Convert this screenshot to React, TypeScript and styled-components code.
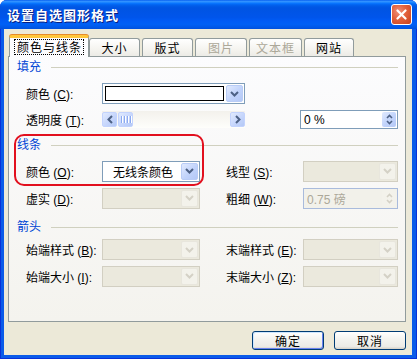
import React from "react";
import styled, { createGlobalStyle } from "styled-components";

const GlobalStyle = createGlobalStyle`
  html, body {
    margin: 0;
    padding: 0;
    background: #ffffff;
  }
  body {
    font-family: "Liberation Sans", "Noto Sans CJK SC", sans-serif;
    font-size: 12px;
    color: #000;
  }
`;

const ChevronDown = ({ color = "#4D6185" }: { color?: string }) => (
  <svg width="9" height="6" viewBox="0 0 9 6">
    <path d="M1 1 L4.5 4.5 L8 1" fill="none" stroke={color} strokeWidth="2" />
  </svg>
);

const ChevronSide = ({ dir }: { dir: "left" | "right" }) => (
  <svg width="6" height="9" viewBox="0 0 6 9">
    <path
      d={dir === "left" ? "M5 1 L1.5 4.5 L5 8" : "M1 1 L4.5 4.5 L1 8"}
      fill="none"
      stroke="#4D6185"
      strokeWidth="2"
    />
  </svg>
);

const SpinArrows = ({ color = "#4D6185" }: { color?: string }) => (
  <svg width="7" height="11" viewBox="0 0 7 11">
    <path d="M1 4 L3.5 1.5 L6 4" fill="none" stroke={color} strokeWidth="1.6" />
    <path d="M1 7 L3.5 9.5 L6 7" fill="none" stroke={color} strokeWidth="1.6" />
  </svg>
);

const App = (): JSX.Element => {
  return (
    <>
      <GlobalStyle />
      <Window>
        <TitleBar>
          <Title>设置自选图形格式</Title>
          <CloseButton>
            <svg width="11" height="11" viewBox="0 0 11 11">
              <path d="M1.5 1.5 L9.5 9.5 M9.5 1.5 L1.5 9.5" stroke="#fff" strokeWidth="2.2" strokeLinecap="round" />
            </svg>
          </CloseButton>
        </TitleBar>

        <Client>
          <TabStrip>
            <Tab $active $w={80}>
              <FocusText>颜色与线条</FocusText>
            </Tab>
            <Tab $w={51}>大小</Tab>
            <Tab $w={51}>版式</Tab>
            <Tab $w={52} $disabled>图片</Tab>
            <Tab $w={53} $disabled>文本框</Tab>
            <Tab $w={50}>网站</Tab>
          </TabStrip>

          <Panel>
            <GroupHeader>填充</GroupHeader>
            <Row $mt={9} $h={21}>
              <Label>颜色 (<u>C</u>):</Label>
              <Combo $w={143}>
                <ComboValue>
                  <Swatch />
                </ComboValue>
                <DropButton>
                  <ChevronDown />
                </DropButton>
              </Combo>
            </Row>
            <Row $mt={6} $h={19}>
              <Label>透明度 (<u>T</u>):</Label>
              <Slider>
                <SliderButton>
                  <ChevronSide dir="left" />
                </SliderButton>
                <Thumb>
                  <Grip />
                  <Grip />
                  <Grip />
                  <Grip />
                </Thumb>
                <SliderTrack />
                <SliderButton>
                  <ChevronSide dir="right" />
                </SliderButton>
              </Slider>
              <Spin $w={98} $ml={55}>
                <SpinText>0 %</SpinText>
                <SpinButton>
                  <SpinArrows />
                </SpinButton>
              </Spin>
            </Row>

            <GroupHeader $mt={9}>线条</GroupHeader>
            <Row $mt={8} $h={22}>
              <Label>颜色 (<u>O</u>):</Label>
              <Combo $w={98}>
                <ComboValue $text>无线条颜色</ComboValue>
                <DropButton>
                  <ChevronDown />
                </DropButton>
              </Combo>
              <RightLabel>线型 (<u>S</u>):</RightLabel>
              <Combo $w={95} $disabled>
                <ComboValue />
                <DropButton $disabled>
                  <ChevronDown color="#D4D1C6" />
                </DropButton>
              </Combo>
            </Row>
            <Row $mt={5} $h={22}>
              <Label>虚实 (<u>D</u>):</Label>
              <Combo $w={98} $disabled>
                <ComboValue />
                <DropButton $disabled>
                  <ChevronDown color="#D4D1C6" />
                </DropButton>
              </Combo>
              <RightLabel>粗细 (<u>W</u>):</RightLabel>
              <Spin $w={95} $disabled>
                <SpinText $disabled>0.75 磅</SpinText>
                <SpinButton $disabled>
                  <SpinArrows color="#D4D1C6" />
                </SpinButton>
              </Spin>
            </Row>

            <GroupHeader $mt={11}>箭头</GroupHeader>
            <Row $mt={5} $h={21}>
              <Label>始端样式 (<u>B</u>):</Label>
              <Combo $w={98} $disabled>
                <ComboValue />
                <DropButton $disabled>
                  <ChevronDown color="#D4D1C6" />
                </DropButton>
              </Combo>
              <RightLabel>末端样式 (<u>E</u>):</RightLabel>
              <Combo $w={95} $disabled>
                <ComboValue />
                <DropButton $disabled>
                  <ChevronDown color="#D4D1C6" />
                </DropButton>
              </Combo>
            </Row>
            <Row $mt={5} $h={22}>
              <Label>始端大小 (<u>I</u>):</Label>
              <Combo $w={98} $disabled>
                <ComboValue />
                <DropButton $disabled>
                  <ChevronDown color="#D4D1C6" />
                </DropButton>
              </Combo>
              <RightLabel>末端大小 (<u>Z</u>):</RightLabel>
              <Combo $w={95} $disabled>
                <ComboValue />
                <DropButton $disabled>
                  <ChevronDown color="#D4D1C6" />
                </DropButton>
              </Combo>
            </Row>

            {/* red annotation round the line colour */}
            <Highlight />
          </Panel>

          <ButtonRow>
            <PushButton $default>确定</PushButton>
            <PushButton>取消</PushButton>
          </ButtonRow>
        </Client>
      </Window>
    </>
  );
};

export default App;

const Window = styled.div`
  width: 417px;
  height: 359px;
  display: flex;
  flex-direction: column;
  border-radius: 7px 7px 0 0;
  overflow: hidden;
  background: #0a5be9;
  box-shadow: inset 1px 0 #0831d9, inset -1px 0 #0831d9, inset 0 -1px #0831d9;
`;

const TitleBar = styled.div`
  height: 29px;
  flex: none;
  display: flex;
  align-items: center;
  justify-content: space-between;
  padding: 0 5px 0 7px;
  background: linear-gradient(
    to bottom,
    #0058ee 0%,
    #3593ff 4%,
    #288eff 7%,
    #127dff 10%,
    #036ffc 13%,
    #0262ee 17%,
    #0057e5 24%,
    #0054e3 30%,
    #0055eb 60%,
    #005bf5 72%,
    #0060f5 84%,
    #0058e8 94%,
    #0050dd 100%
  );
`;

const Title = styled.div`
  color: #ffffff;
  font-family: "Noto Sans CJK SC", sans-serif;
  font-weight: bold;
  font-size: 13px;
  letter-spacing: 1px;
  line-height: 16px;
  text-shadow: 1px 1px #0a1e80;
`;

const CloseButton = styled.div`
  width: 21px;
  height: 21px;
  box-sizing: border-box;
  border: 1px solid #ffffff;
  border-radius: 3px;
  display: flex;
  align-items: center;
  justify-content: center;
  background: radial-gradient(circle at 35% 35%, #f0907a 0%, #e2613c 45%, #c6401c 100%);
`;

const Client = styled.div`
  flex: 1;
  display: flex;
  flex-direction: column;
  margin: 0 5px 4px 4px;
  padding: 6px 6px 0 4px;
  background: #ece9d8;
`;

const TabStrip = styled.div`
  height: 22px;
  display: flex;
  align-items: flex-end;
  gap: 2px;
  padding-left: 1px;
  margin-bottom: -1px;
  position: relative;
  z-index: 1;
`;

const Tab = styled.div<{ $active?: boolean; $disabled?: boolean; $w: number }>`
  width: ${(p) => p.$w}px;
  box-sizing: border-box;
  display: flex;
  align-items: center;
  justify-content: center;
  font-family: "Noto Sans CJK SC", sans-serif;
  font-size: 12px;
  letter-spacing: 1px;
  line-height: 14px;
  color: ${(p) => (p.$disabled ? "#aca899" : "#000")};
  border: 1px solid #919b9c;
  border-bottom: none;
  border-radius: 3px 3px 0 0;
  height: ${(p) => (p.$active ? 22 : 18)}px;
  margin-bottom: ${(p) => (p.$active ? 0 : 1)}px;
  margin-right: ${(p) => (p.$active ? -2 : 0)}px;
  background: ${(p) => (p.$active ? "#fcfcfe" : "linear-gradient(#ffffff, #f3f2ed 70%, #ecebe6)")};
  border-top: ${(p) => (p.$active ? "3px solid #ffc73c" : "1px solid #919b9c")};
  box-shadow: ${(p) => (p.$active ? "0 -1px #e68b2c" : "none")};
  padding-bottom: ${(p) => (p.$active ? 1 : 0)}px;
`;

const FocusText = styled.span`
  outline: 1px dotted #000;
  padding: 0 1px 0 2px;
`;

const Panel = styled.div`
  position: relative;
  height: 266px;
  box-sizing: border-box;
  border: 1px solid #919b9c;
  background: linear-gradient(to bottom, #fcfcfe, #f4f3ee);
  padding: 3px 7px 0 8px;
  display: flex;
  flex-direction: column;
`;

const GroupHeader = styled.div<{ $mt?: number }>`
  margin-top: ${(p) => p.$mt || 0}px;
  height: 14px;
  display: flex;
  align-items: center;
  gap: 10px;
  color: #0046d5;
  font-size: 12px;
  line-height: 14px;
  &::after {
    content: "";
    flex: 1;
    height: 1px;
    background: #d0d0bf;
  }
`;

const Row = styled.div<{ $mt: number; $h: number }>`
  margin-top: ${(p) => p.$mt}px;
  height: ${(p) => p.$h}px;
  display: flex;
  align-items: center;
  padding-left: 9px;
`;

const Label = styled.div`
  width: 76px;
  flex: none;
  font-size: 12px;
  white-space: nowrap;
`;

const RightLabel = styled(Label)`
  width: 77px;
  margin-left: 26px;
`;

const Combo = styled.div<{ $w: number; $disabled?: boolean }>`
  width: ${(p) => p.$w}px;
  height: 21px;
  flex: none;
  box-sizing: border-box;
  display: flex;
  padding: 1px;
  border: 1px solid ${(p) => (p.$disabled ? "#d2cfc2" : "#7f9db9")};
  background: ${(p) => (p.$disabled ? "#ebe9dd" : "#ffffff")};
`;

const ComboValue = styled.div<{ $text?: boolean }>`
  flex: 1;
  display: flex;
  align-items: center;
  padding: 1px 2px 1px 1px;
  padding-left: ${(p) => (p.$text ? 9 : 1)}px;
  font-family: "Noto Sans CJK SC", sans-serif;
  font-size: 12px;
`;

const Swatch = styled.div`
  flex: 1;
  height: 15px;
  box-sizing: border-box;
  border: 1px solid #000;
  background: #ffffff;
`;

const DropButton = styled.div<{ $disabled?: boolean }>`
  width: 15px;
  flex: none;
  display: flex;
  align-items: center;
  justify-content: center;
  border-radius: 2px;
  border: 1px solid ${(p) => (p.$disabled ? "#e8e6dd" : "#b9ccf6")};
  background: ${(p) =>
    p.$disabled ? "#f3f2eb" : "linear-gradient(135deg, #e1eafe 0%, #c1d3fb 55%, #b4c8f6 100%)"};
`;

const Slider = styled.div`
  width: 143px;
  height: 17px;
  flex: none;
  box-sizing: border-box;
  display: flex;
  align-items: center;
  gap: 1px;
  padding: 1px 0;
  background: linear-gradient(to bottom, #f3f1ec, #fefefb);
`;

const SliderButton = styled.div`
  width: 15px;
  height: 15px;
  box-sizing: border-box;
  display: flex;
  align-items: center;
  justify-content: center;
  border: 1px solid #c3d3fd;
  border-radius: 2px;
  background: linear-gradient(135deg, #e1eafe 0%, #c6d6fc 55%, #b4c8f6 100%);
`;

const Thumb = styled(SliderButton)`
  gap: 2px;
`;

const Grip = styled.div`
  width: 1px;
  height: 7px;
  background: #8caaf0;
  box-shadow: 1px 0 #ffffff;
`;

const SliderTrack = styled.div`
  flex: 1;
`;

const Spin = styled.div<{ $w: number; $ml?: number; $disabled?: boolean }>`
  width: ${(p) => p.$w}px;
  height: ${(p) => (p.$disabled ? 21 : 19)}px;
  margin-left: ${(p) => p.$ml || 0}px;
  flex: none;
  box-sizing: border-box;
  display: flex;
  padding: 1px;
  border: 1px solid ${(p) => (p.$disabled ? "#a9bbdc" : "#7f9db9")};
  background: ${(p) => (p.$disabled ? "#f2f1ea" : "#ffffff")};
`;

const SpinText = styled.div<{ $disabled?: boolean }>`
  flex: 1;
  display: flex;
  align-items: center;
  padding-left: 2px;
  font-family: "Liberation Sans", "Noto Sans CJK SC", sans-serif;
  font-size: 12px;
  color: ${(p) => (p.$disabled ? "#aca899" : "#000")};
`;

const SpinButton = styled.div<{ $disabled?: boolean }>`
  width: 14px;
  flex: none;
  display: flex;
  align-items: center;
  justify-content: center;
  border-radius: 2px;
  background: ${(p) =>
    p.$disabled ? "#f3f2eb" : "linear-gradient(135deg, #e1eafe 0%, #c1d3fb 55%, #b4c8f6 100%)"};
`;

const Highlight = styled.div`
  position: absolute;
  left: 5px;
  top: 77px;
  width: 190px;
  height: 52px;
  box-sizing: border-box;
  border: 2px solid #e2101e;
  border-radius: 10px;
  pointer-events: none;
`;

const ButtonRow = styled.div`
  display: flex;
  justify-content: flex-end;
  gap: 10px;
  margin-top: 9px;
`;

const PushButton = styled.div<{ $default?: boolean }>`
  width: 72px;
  height: 19px;
  box-sizing: border-box;
  display: flex;
  align-items: center;
  justify-content: center;
  font-family: "Noto Sans CJK SC", sans-serif;
  font-size: 12px;
  letter-spacing: 1px;
  border: 1px solid #003c74;
  border-radius: 3px;
  background: linear-gradient(to bottom, #ffffff 0%, #f4f4f0 40%, #ecebe6 85%, #d6d0c5 100%);
  box-shadow: ${(p) => (p.$default ? "inset 1px 1px #cee7ff, inset -1px -1px #6982ee" : "none")};
`;
